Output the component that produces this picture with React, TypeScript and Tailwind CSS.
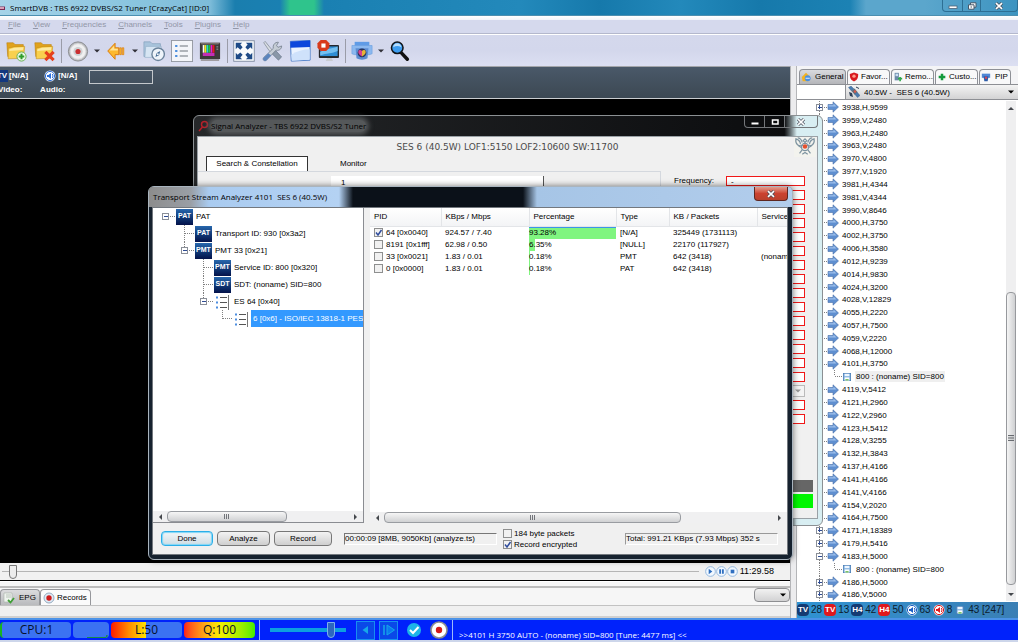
import type { ReactNode } from "react";

const channels = [
  "3938,H,9599",
  "3959,V,2480",
  "3963,H,2480",
  "3963,V,2480",
  "3970,V,4800",
  "3977,V,1920",
  "3981,H,4344",
  "3981,V,4344",
  "3990,V,8646",
  "4000,H,3750",
  "4002,H,3750",
  "4006,H,3580",
  "4012,H,9239",
  "4014,H,9830",
  "4024,H,3200",
  "4028,V,12829",
  "4055,H,2220",
  "4057,H,7500",
  "4059,V,2220",
  "4068,H,12000",
  "4101,H,3750",
  "800 : (noname) SID=800",
  "4119,V,5412",
  "4121,H,2960",
  "4122,V,2960",
  "4123,H,5412",
  "4128,V,3255",
  "4132,H,3843",
  "4137,H,4166",
  "4141,H,4166",
  "4141,V,4166",
  "4154,V,2020",
  "4164,H,7500",
  "4171,H,18389",
  "4179,H,5416",
  "4183,H,5000",
  "800 : (noname) SID=800",
  "4186,H,5000",
  "4186,V,5000",
];

const pids = [
  { pid: "64 [0x0040]", rate: "924.57 / 7.40", pct: "93.28%", bar: 100, type: "[N/A]", kb: "325449 (1731113)", service: "", checked: true },
  { pid: "8191 [0x1fff]", rate: "62.98 / 0.50", pct: "6.35%", bar: 7, type: "[NULL]", kb: "22170 (117927)", service: "", checked: false },
  { pid: "33 [0x0021]", rate: "1.83 / 0.01", pct: "0.18%", bar: 1, type: "PMT", kb: "642 (3418)", service: "(noname)", checked: false },
  { pid: "0 [0x0000]", rate: "1.83 / 0.01", pct: "0.18%", bar: 1, type: "PAT", kb: "642 (3418)", service: "", checked: false },
];

type Guide = "blank" | "line" | "tee" | "corner" | "plus" | "minus" | "minusLine" | "root";

// One cell of dotted tree lines, optionally with an expander box
function GuideCell({ kind, className }: { kind: Guide; className: string }) {
  const boxed = ["plus", "minus", "minusLine", "root"].includes(kind);
  const half = kind === "corner" || kind === "minus";
  return (
    <svg className={`h-full shrink-0 ${className}`} shapeRendering="crispEdges">
      {kind !== "blank" && kind !== "root" && (
        <line x1="50%" x2="50%" y1="0" y2={half ? "50%" : "100%"} stroke="#808080" strokeDasharray="1 1" />
      )}
      {kind !== "blank" && kind !== "line" && (
        <line x1="50%" x2="100%" y1="50%" y2="50%" stroke="#808080" strokeDasharray="1 1" />
      )}
      {boxed && (
        <svg x="50%" y="50%" overflow="visible">
          <rect x="-3" y="-3" width="6" height="6" fill="#fff" stroke="#8a8f98" />
          <path d={kind === "plus" ? "M-2 0h4M0-2v4" : "M-2 0h4"} stroke="#2f4c94" />
        </svg>
      )}
    </svg>
  );
}

function ArrowIcon() {
  return (
    <svg viewBox="0 0 12 12" className="h-3 w-3">
      <path d="M1 3.500h5V.8L11.500 6 6 11.200V8.500H1z" fill="#5f8fd0" stroke="#4a70a8" strokeWidth=".6" />
      <path d="M1.500 4.200h5V2.500L9.500 5.500h-8z" fill="#9dbfea" />
    </svg>
  );
}

function DiskIcon() {
  return (
    <svg viewBox="0 0 10 10" className="h-2 w-2 shrink-0">
      <rect x=".5" y=".5" width="9" height="9" fill="#7fb0df" stroke="#4b7fb8" />
      <rect x="2" y="1" width="6" height="3" fill="#eef6ff" />
      <rect x="2" y="5.500" width="6" height="4" fill="#fff" />
      <rect x="3" y="7.500" width="4" height="2" fill="#7cc36a" />
    </svg>
  );
}

function Caret({ className = "" }: { className?: string }) {
  return (
    <svg viewBox="0 0 6 4" className={`w-1.5 ${className}`}>
      <path d="M0 .5h6L3 3.500z" fill="currentColor" />
    </svg>
  );
}

function ToolButton({ label, children }: { label: string; children: ReactNode }) {
  return (
    <button aria-label={label} className="flex h-7 w-7 shrink-0 items-center justify-center">
      <svg viewBox="0 0 24 24" className="h-[22px] w-[22px]">
        {children}
      </svg>
    </button>
  );
}

function CaretButton({ label }: { label: string }) {
  return (
    <button aria-label={label} className="flex h-7 w-2.5 items-center justify-center text-[#303038]">
      <Caret />
    </button>
  );
}

function Divider() {
  return (
    <div className="flex h-6 w-1.5 justify-center">
      <div className="w-px bg-[#9a9ca8]" />
    </div>
  );
}

function Folder() {
  return (
    <>
      <path d="M2 3h7l2 2h9v13H3z" fill="#e0a21c" stroke="#b97f0e" strokeWidth=".6" />
      <path d="M3.500 9l6-1.500 12-.500-1.500 13-16.500.5z" fill="#f9d04e" stroke="#c08a14" strokeWidth=".6" />
      <path d="M5 10l5-1.500 10-.5-.5 3-15 1z" fill="#fdeaa0" />
    </>
  );
}

function Toolbar() {
  return (
    <div className="flex h-[31px] shrink-0 items-center bg-gradient-to-b from-[#d4d8ec] via-[#d3d7ec] to-[#dcdff2] pl-0.5">
      <ToolButton label="Open">
        <Folder />
        <circle cx="18" cy="18" r="5" fill="#e9f6e6" stroke="#5fae4c" />
        <path d="M18 15v6M15 18h6" stroke="#2f9c2a" strokeWidth="2.200" />
      </ToolButton>
      <ToolButton label="Delete">
        <Folder />
        <path d="M13.500 13l9 9M22.500 13l-9 9" stroke="#e5401d" strokeWidth="3.400" />
      </ToolButton>
      <Divider />
      <ToolButton label="Record">
        <circle cx="12" cy="12.500" r="10.500" fill="#b9bbbd" stroke="#77797c" strokeWidth=".8" />
        <circle cx="12" cy="12.500" r="8.500" fill="#f0f0f0" stroke="#d9dadc" />
        <circle cx="12" cy="12.500" r="5" fill="#cdd0d2" />
        <circle cx="12" cy="12.500" r="2.800" fill="#c92f2f" />
      </ToolButton>
      <CaretButton label="Record options" />
      <ToolButton label="Back">
        <path d="M3 12l8-8.500v5h4v7.500h-4v5z" fill="#fdb92e" stroke="#d97708" />
        <path d="M16 8.500h1.800V16H16zM18.800 8.500h1.700V16h-1.700z" fill="#fdb92e" stroke="#d97708" strokeWidth=".7" />
        <path d="M5 11.500l5-5.200v3.200h4v2z" fill="#ffe394" />
      </ToolButton>
      <CaretButton label="Back options" />
      <ToolButton label="Schedule">
        <path d="M1 2h7l2 2h9v14H1z" fill="#a9c4dc" stroke="#7f9cb8" strokeWidth=".7" />
        <path d="M3 7h17v12H2z" fill="#d6e5f3" stroke="#8fabc4" strokeWidth=".6" />
        <circle cx="16.500" cy="15.500" r="6.800" fill="#eef4fa" stroke="#6b839b" strokeWidth="1.500" />
        <path d="M18.800 12l-1.300 4.500-4 2 1.500-4.200z" fill="#3f6791" />
        <circle cx="16.200" cy="15.500" r="1" fill="#fff" />
      </ToolButton>
      <ToolButton label="Channel list">
        <rect x=".500" y=".500" width="23" height="23" fill="#f3f5f9" stroke="#9297a0" />
        <path d="M9.500 6.500h9M9.500 12h9M9.500 17.500h9" stroke="#6d747d" strokeWidth="1.200" />
        <path d="M4.500 6.500H7M4.500 12H7M4.500 17.500H7" stroke="#4c8fdf" strokeWidth="2.200" />
      </ToolButton>
      <ToolButton label="Picture">
        <path d="M1 3h22v17l-1 1H2l-1-1z" fill="#3c3a3a" />
        <path d="M1 3h22l-2 2H3z" fill="#77706c" />
        <rect x="4" y="5.500" width="13" height="12" fill="#111" />
        <path d="M4 5.500h2V14H4z" fill="#f8f8f8" />
        <path d="M6 5.500h2.200V14H6z" fill="#f1e61b" />
        <path d="M8.200 5.500h2.200V14H8.200z" fill="#20d7d7" />
        <path d="M10.400 5.500h2.200V14h-2.200z" fill="#22c832" />
        <path d="M12.600 5.500h2.200V14h-2.200z" fill="#e321d5" />
        <path d="M14.800 5.500H17V14h-2.200z" fill="#e42020" />
        <path d="M4 14h13v3.500H4z" fill="#c32fb4" />
        <path d="M19 7.500h2M19 10h2" stroke="#aaa" />
        <path d="M2 22h20" stroke="#7c746c" />
      </ToolButton>
      <Divider />
      <ToolButton label="Full screen">
        <rect x=".800" y=".800" width="22.400" height="22.400" fill="#f8fafc" stroke="#7f8ba0" />
        <path d="M3 3h7L8 5l2.500 3L8 10.500 5 8l-2 2zM21 3h-7l2 2-2.500 3 2.500 2.500L19 8l2 2zM3 21h7l-2-2 2.500-3L8 13.500 5 16l-2-2zM21 21h-7l2-2-2.500-3 2.500-2.500L19 16l2-2z" fill="#1e4a86" />
      </ToolButton>
      <ToolButton label="Settings">
        <path d="M3 3l1.500-1.500 6 7.500 4 4-2 2-4-4z" fill="#d9dde3" stroke="#7d8793" strokeWidth=".8" />
        <path d="M13 13l3-1.500 6.500 7-3.500 3.500-6.500-6.500z" fill="#8a97a8" stroke="#59687c" strokeWidth=".6" />
        <path d="M2.500 19.500L13.500 9c-1-3 1.500-7 5.500-6.500l-2 3.500 1.500 2 4-1.500c0 3.500-3 5.500-6 4.500L5.500 22.500c-2 .8-4-1-3-3z" fill="#c5ccd5" stroke="#6c7785" strokeWidth=".8" />
        <path d="M2.500 19.500l5.500-5 3 2.500-5.500 5.500c-2 .8-4-1-3-3z" fill="#5b84bd" />
      </ToolButton>
      <ToolButton label="Window">
        <path d="M1.500 1.500L23 .5v21.500L2.500 23z" fill="#eaf3ff" stroke="#4275c4" />
        <path d="M1.500 1.500L23 .5V7.500L1.500 8.500z" fill="#0c48dc" />
        <path d="M2.500 16c6-4 13-6 20-6v11.500L3 22.500z" fill="#cfe2fb" />
      </ToolButton>
      <ToolButton label="Display">
        <rect x="2" y="5.500" width="22" height="14" rx="1" fill="#26282c" />
        <path d="M3.500 7H22.500v10.500H3.500z" fill="#2f8ed4" />
        <path d="M3.500 13C10 9 17 9.500 22.500 7v5c-6 3-12 2-19 5z" fill="#74bff0" />
        <path d="M11 19.500h5l1.500 3.500h-8z" fill="#c9ccd1" />
        <path d="M4 0h6l3.500 3.500v5L10 12H4L.5 8.500v-5z" fill="#d83a1c" />
        <rect x="4.800" y="3.800" width="4.500" height="4.500" fill="#fff" />
      </ToolButton>
      <Divider />
      <ToolButton label="Capture">
        <path d="M4 2h16v5H4z" fill="#5f9be6" />
        <path d="M1 6h22v9l-3 1H4l-3-1z" fill="#8bb8ef" stroke="#6c9fe0" strokeWidth=".7" />
        <path d="M5 9h14l-1 11c-3 2-9 2-12 0z" fill="#5c8cd2" />
        <circle cx="12" cy="14" r="4.800" fill="#29365c" />
        <path d="M12 18c-3-2-4.500-3.500-4-5.500.500-2 3-2 4-.500z" fill="#d84090" />
        <path d="M12 18c3-2 4.500-3.500 4-5.500-.500-2-3-2-4-.500z" fill="#e8b338" />
      </ToolButton>
      <CaretButton label="Capture options" />
      <ToolButton label="Search">
        <path d="M13.500 14l6.500 7" stroke="#111" strokeWidth="3.800" strokeLinecap="round" />
        <circle cx="9" cy="8.500" r="6.300" fill="#3e9df0" stroke="#121417" strokeWidth="1.700" />
        <path d="M4.500 8c.5-6 8.500-6 9 0-3-2-6-2-9 0z" fill="#b9defb" />
      </ToolButton>
    </div>
  );
}

function TitleBar() {
  return (
    <div className="flex h-4 shrink-0 items-center justify-between overflow-hidden border-b border-[#4c8fb0] bg-[linear-gradient(to_right,#a5d3e8_0,#8cc6e0_120px,#7dbcd9_210px,#1a7eae_235px,#1a80b2_280px,#2fc48c_290px,#2fc48c_314px,#1a80b2_324px,#2389bb_520px,#1679ab_600px,#2389bb_680px,#1679ab_760px,#1c82b4_850px,#5ba6cc_866px,#5ba6cc_925px,#3c93c0_100%)]">
      <div className="flex items-center">
        <svg viewBox="0 0 12 12" className="mr-1 h-2.5 w-1.5">
          <path d="M0 3h10v7H0z" fill="#7a2d55" />
          <path d="M0 4h8v4H0z" fill="#d8a0b8" />
        </svg>
        <h1 className="whitespace-nowrap font-['Open_Sans',sans-serif] text-[8px] leading-4 text-black">
          SmartDVB : TBS 6922 DVBS/S2 Tuner [CrazyCat] [ID:0]
        </h1>
      </div>
      <div className="flex h-3 self-start rounded-b border border-t-0 border-[#2d6f94] text-[#d5e9f4]">
        <button aria-label="Minimize" className="flex w-5 items-center justify-center border-r border-[#2d6f94]">
          <svg viewBox="0 0 10 8" className="h-2 w-2.5">
            <rect x="1" y="4" width="8" height="2.500" fill="#fff" stroke="#4e6274" strokeWidth=".8" />
          </svg>
        </button>
        <button aria-label="Restore" className="flex w-[18px] items-center justify-center border-r border-[#2d6f94]">
          <svg viewBox="0 0 10 8" className="h-2 w-2.5">
            <path d="M3.500.8h5.500v4.400H3.500z" fill="#fff" stroke="#45586a" />
            <path d="M1.500 2.800H7v4.400H1.500z" fill="#fff" stroke="#45586a" />
            <path d="M3.500 4.500H5v1H3.500z" fill="#45586a" />
          </svg>
        </button>
        <button aria-label="Close" className="flex w-9 items-center justify-center">
          <CloseGlyph />
        </button>
      </div>
    </div>
  );
}

function CloseGlyph() {
  return (
    <svg viewBox="0 0 10 8" className="h-2 w-2.5">
      <path d="M2 1.200l6 5.600M8 1.200L2 6.800" stroke="#4b4f5a" strokeWidth="3" />
      <path d="M2 1.200l6 5.600M8 1.200L2 6.800" stroke="#fff" strokeWidth="1.600" />
    </svg>
  );
}

function MenuBar() {
  return (
    <nav className="flex h-[13px] shrink-0 items-start gap-3 bg-[#d5d9ed] pl-2 text-[8px] leading-[10px] text-[#9297a8]">
      {["File", "View", "Frequencies", "Channels", "Tools", "Plugins", "Help"].map((item) => (
        <a key={item} href="#" className="first-letter:underline">
          {item}
        </a>
      ))}
    </nav>
  );
}

function InfoPanel() {
  return (
    <div className="flex h-8 shrink-0 items-start gap-1 border-b border-[#c9cccf] bg-gradient-to-b from-[#4a5969] to-[#3c4853] pt-[3px] text-[8px] font-bold text-white">
      <div className="flex flex-col gap-0.5">
        <div className="flex h-3 items-center gap-px">
          <span className="-ml-1 flex h-3 w-3 items-center justify-center bg-[#12377f] leading-3">TV</span>
          <span>[N/A]</span>
        </div>
        <span className="-ml-0.5 leading-3">Video:</span>
      </div>
      <div className="ml-2 flex flex-col gap-0.5">
        <div className="flex h-3 items-center gap-0.5 pl-1">
          <SoundIcon color="#2e6fd8" />
          <span>[N/A]</span>
        </div>
        <span className="leading-3">Audio:</span>
      </div>
      <div className="ml-2 h-3.5 w-16 border border-[#c4c8cc]" />
    </div>
  );
}

function SoundIcon({ color }: { color: string }) {
  return (
    <svg viewBox="0 0 12 12" className="h-3 w-3 shrink-0">
      <circle cx="6" cy="6" r="5.500" fill="#fff" />
      <circle cx="6" cy="6" r="4.600" fill="none" stroke={color} strokeWidth="1" />
      <path d="M3 5h1.500L7 3v6L4.500 7H3z" fill={color} />
      <path d="M8.200 4c1 1.200 1 2.800 0 4" stroke={color} fill="none" />
    </svg>
  );
}

const panelTabs = [
  { label: "General", icon: <><path d="M1 6l5-5 5 5-2 5H2z" fill="#f3b21f" /><circle cx="8" cy="7.500" r="3.500" fill="#4a90e2" /><path d="M5.500 7.500h5" stroke="#fff" /></> },
  { label: "Favor...", icon: <><path d="M6 .5l5 2c0 5-1 7-5 9-4-2-5-4-5-9z" fill="#d8191f" /><circle cx="6" cy="5" r="2" fill="#ff9c8a" /></> },
  { label: "Remo...", icon: <><rect x="2" y="1" width="5" height="9" fill="#6b89a8" /><rect x="3" y="2" width="3" height="3" fill="#c9dff2" /><path d="M6 8h5M8.500 6v5" stroke="#2fa84a" strokeWidth="2" /></> },
  { label: "Custo...", icon: <path d="M6 2v8M2 6h8" stroke="#139a3c" strokeWidth="3" /> },
  { label: "PIP", icon: <><path d="M1 2h10v5H1z" fill="#4f87d6" /><path d="M3 5h6l-1 6H4z" fill="#2d5ca8" /><circle cx="6" cy="7" r="1.500" fill="#d0475f" /></> },
];

function ScrollArrow({ dir }: { dir: "up" | "down" | "left" | "right" }) {
  const d = { up: "M0 5h6L3 2z", down: "M0 2h6L3 5z", left: "M5 0v6L2 3z", right: "M1 0v6l3-3z" }[dir];
  return (
    <svg viewBox="0 0 6 6" className="h-1.5 w-1.5">
      <path d={d} fill="#45484d" />
    </svg>
  );
}

function ChannelPanel() {
  return (
    <aside className="flex w-[221px] shrink-0 flex-col bg-white">
      <div className="flex h-[18px] shrink-0 items-end gap-px bg-[#f4f4f6] pl-0.5">
        {panelTabs.map((tab, i) => (
          <button
            key={tab.label}
            className={`flex h-[15px] items-center whitespace-nowrap rounded-t border border-b-0 border-[#8e9096] text-[8px] ${
              i === 0 ? "w-[47px] gap-1 bg-gradient-to-b from-[#d9dade] to-[#b5b6ba]" : i === 4 ? "w-8 gap-1 bg-[#f8f8f9]" : "w-[43px] gap-0.5 bg-[#f8f8f9]"
            } pl-px`}
          >
            <svg viewBox="0 0 12 12" className="h-2.5 w-2.5 shrink-0">
              {tab.icon}
            </svg>
            {tab.label}
          </button>
        ))}
      </div>
      <div className="flex h-4 shrink-0 border-y border-[#8d8f94]">
        <input aria-label="Filter" className="w-12 min-w-0 bg-white outline-none" />
        <div className="relative flex flex-1 items-center border-l border-[#8d8f94] bg-gradient-to-b from-[#f4f4f4] to-[#d3d3d4] pl-0.5">
          <svg viewBox="0 0 12 12" className="h-3 w-3 shrink-0">
            <path d="M.5 1.500L3 0l3 3-2.500 2zM6.500 8L9 6l3 3.500-2.500 2z" fill="#4a7bb0" stroke="#33577f" strokeWidth=".4" />
            <path d="M3.500 5l3-2.500 3 3.500-3 2.500z" fill="#5c6b7c" />
            <path d="M1 6l3 1 1 4-3-1z" fill="#2b3d55" />
            <circle cx="7" cy="5.500" r="1.300" fill="#d85a4a" />
            <path d="M8 1l3 1.500" stroke="#2b3d55" />
          </svg>
          <select aria-label="Satellite" className="h-full flex-1 appearance-none bg-transparent pl-1 text-[8px] leading-[13px] outline-none">
            <option>40.5W - &nbsp;SES 6 (40.5W)</option>
          </select>
          <Caret className="pointer-events-none absolute right-1" />
        </div>
      </div>
      <div className="flex min-h-0 flex-1 py-px">
        <ul className="flex min-h-0 flex-1 flex-col pl-[15px] text-[8px]">
          {channels.map((ch, i) => {
            const child = ch.startsWith("800");
            const kind: Guide = child ? "line" : i === 35 ? "minusLine" : i === 0 || i > 32 ? "plus" : "tee";
            return (
              <li key={i} className="flex min-h-0 flex-1 items-center">
                {child && i < 30 ? <GuideCell kind="blank" className="w-[15px]" /> : <GuideCell kind={kind} className="w-[15px]" />}
                {child ? (
                  <>
                    <GuideCell kind="corner" className="mr-px w-[15px]" />
                    <DiskIcon />
                    <span className={`ml-1 px-px leading-[11px] ${i < 30 ? "bg-[#efefef]" : ""}`}>{ch}</span>
                  </>
                ) : (
                  <>
                    <ArrowIcon />
                    <span className="ml-[3px] leading-[11px]">{ch}</span>
                  </>
                )}
              </li>
            );
          })}
        </ul>
        <div className="mr-0.5 flex w-2.5 flex-col items-center bg-[#efeff0] py-1">
          <ScrollArrow dir="up" />
          <div className="h-[181px]" />
          <div className="flex w-full flex-1 items-center justify-center rounded-sm border border-[#97999d] bg-gradient-to-r from-[#f5f5f5] to-[#cfd0d2]">
            <svg viewBox="0 0 5 6" className="w-1.5">
              <path d="M0 .5h5M0 2.500h5M0 4.500h5" stroke="#55585e" strokeWidth=".8" />
            </svg>
          </div>
          <div className="h-1.5" />
          <ScrollArrow dir="down" />
        </div>
      </div>
      <div className="flex h-4 shrink-0 items-center gap-0.5 whitespace-nowrap bg-gradient-to-r from-[#2f93d2] to-[#3a7fb5] text-[10px] leading-4 text-[#0d1c2c]">
        <Badge text="TV" className="bg-[#153a72]" />28
        <Badge text="TV" className="bg-[#e0181c]" />13
        <Badge text="H4" className="bg-[#153a72]" />42
        <Badge text="H4" className="bg-[#e0181c]" />50
        <SoundIcon color="#1c5fc4" />63
        <SoundIcon color="#e0181c" />8
        <span className="px-0.5"><DiskIcon /></span>
        43 [247]
      </div>
    </aside>
  );
}

function Badge({ text, className }: { text: string; className: string }) {
  return (
    <span className={`flex h-3 w-3 shrink-0 items-center justify-center rounded-sm text-[8px] font-bold text-white ${className}`}>
      {text}
    </span>
  );
}

function BottomPanel() {
  return (
    <>
      <div className="flex h-[17px] shrink-0 items-center bg-[#f1f1f1] pl-0.5 pr-4">
        <input
          type="range"
          aria-label="Position"
          defaultValue={1}
          className="h-3.5 min-w-0 flex-1 appearance-none bg-transparent [&::-webkit-slider-runnable-track]:h-px [&::-webkit-slider-runnable-track]:bg-[#b5b5b5] [&::-webkit-slider-thumb]:-mt-1.5 [&::-webkit-slider-thumb]:h-3.5 [&::-webkit-slider-thumb]:w-2 [&::-webkit-slider-thumb]:appearance-none [&::-webkit-slider-thumb]:rounded-b [&::-webkit-slider-thumb]:border [&::-webkit-slider-thumb]:border-[#777] [&::-webkit-slider-thumb]:bg-[#ececec]"
        />
        <div className="ml-1.5 flex">
          {["M4 3l4 3-4 3z", "M3.500 3.500h2v5h-2zM6.500 3.500h2v5h-2z", "M4 4h4v4H4z"].map((d, i) => (
            <button key={d} aria-label={["Play", "Pause", "Stop"][i]} className="w-[11px]">
              <svg viewBox="0 0 12 12">
                <circle cx="6" cy="6" r="5.300" fill="#f3f9ff" stroke="#8db4dc" />
                <path d={d} fill="#2f6fc0" />
              </svg>
            </button>
          ))}
        </div>
        <span className="ml-0.5 text-[9px] leading-[17px]">11:29.58</span>
      </div>
      <div className="h-0.5 shrink-0 border-b border-white bg-black" />
      <div className="h-1.5 shrink-0 border-b-2 border-[#bcbcbc] bg-[#f6f6f6]" />
      <div className="flex h-[18px] shrink-0 items-start justify-between border-b border-[#c2c2c2] bg-[#f6f6f6]">
        <div className="flex self-end">
          <button className="flex h-4 w-10 items-center gap-1 rounded-t border border-b-0 border-[#96979b] bg-gradient-to-b from-[#dcdcde] to-[#b9babd] pl-0.5 text-[8px]">
            <svg viewBox="0 0 12 12" className="h-3 w-3">
              <path d="M1 1h8v9H1z" fill="#eef3ee" stroke="#a9b3a9" strokeWidth=".6" />
              <path d="M3 3h5M3 5h5" stroke="#98a898" strokeWidth=".6" />
              <path d="M5 8l2.500 2.500L11 6" fill="none" stroke="#3f9f36" strokeWidth="1.800" />
            </svg>
            EPG
          </button>
          <button className="flex h-4 w-[51px] items-center gap-0.5 rounded-t border border-b-0 border-[#96979b] bg-[#fbfbfb] pl-0.5 text-[8px]">
            <svg viewBox="0 0 12 12" className="h-3 w-3">
              <circle cx="6" cy="6" r="5" fill="#dfe9f3" stroke="#93aac0" />
              <circle cx="6" cy="6" r="2.700" fill="#cf1a1a" />
            </svg>
            Records
          </button>
        </div>
        <div className="relative flex h-3.5 w-9 items-center">
          <select aria-label="View" className="h-full w-full appearance-none rounded-sm border border-[#8e8f92] bg-gradient-to-b from-[#f2f2f2] to-[#d2d2d3]" />
          <Caret className="pointer-events-none absolute right-1" />
        </div>
      </div>
      <div className="h-3 shrink-0 border-b-2 border-[#d0d0d0] bg-[#f0f0f0]" />
    </>
  );
}

function StatusBar() {
  return (
    <footer className="flex h-6 shrink-0 items-center gap-1 border-y-2 border-b-[#cdd6ea] border-t-[#4c93e8] bg-[#0022fb] font-['Open_Sans',sans-serif]">
      <div className="flex gap-0.5 text-xs leading-4 text-[#06102c]">
        <div className="h-4 w-[71px] rounded border-l-2 border-[#19b51c] bg-[#3b72f2] text-center">CPU:1</div>
        <div className="flex h-4 w-9 items-end justify-end rounded bg-[#3b72f2]">
          <svg viewBox="0 0 22 4" className="w-[22px]">
            <path d="M0 3.500h19l1-2.500v2.500" stroke="#188c4a" fill="none" />
          </svg>
        </div>
        <div className="h-4 w-[71px] rounded bg-[linear-gradient(to_right,#ff1a00,#ff8c00_25%,#ffe600_50%,#3b72f2_50%)] text-center">L:50</div>
        <div className="h-4 w-[71px] rounded bg-gradient-to-r from-[#ff1a1a] via-[#f7ee00] to-[#3dee00] text-center">Q:100</div>
      </div>
      <div className="h-full w-px bg-[#9db9fa]" />
      <input
        type="range"
        aria-label="Volume"
        defaultValue={84}
        className="mx-1.5 h-4 w-[76px] appearance-none bg-transparent [&::-webkit-slider-runnable-track]:h-1 [&::-webkit-slider-runnable-track]:bg-[#0c9fe0] [&::-webkit-slider-thumb]:-mt-1.5 [&::-webkit-slider-thumb]:h-4 [&::-webkit-slider-thumb]:w-2 [&::-webkit-slider-thumb]:appearance-none [&::-webkit-slider-thumb]:rounded-b-full [&::-webkit-slider-thumb]:border [&::-webkit-slider-thumb]:border-[#7fb0ea] [&::-webkit-slider-thumb]:bg-[#2d66c0]"
      />
      <button aria-label="Previous" className="flex h-[19px] w-[19px] items-center justify-center border border-[#178ff0] bg-[#0a49e8]">
        <svg viewBox="0 0 16 16" className="h-4 w-4">
          <path d="M10 4v8L4.500 8z" fill="#16a8e8" />
        </svg>
      </button>
      <button aria-label="Next" className="flex h-[19px] w-[19px] items-center justify-center border border-[#178ff0] bg-[#0a49e8]">
        <svg viewBox="0 0 16 16" className="h-4 w-4">
          <path d="M3 3v10" stroke="#16a8e8" strokeWidth="1.500" />
          <path d="M6 3v10l7.500-5z" fill="#0a7af0" stroke="#16a8e8" />
        </svg>
      </button>
      <button aria-label="Confirm" className="ml-1 w-4">
        <svg viewBox="0 0 16 16">
          <circle cx="8" cy="8" r="7" fill="#1cb4e8" />
          <path d="M4 8l3 3 5.500-6" fill="none" stroke="#fff" strokeWidth="2" />
        </svg>
      </button>
      <button aria-label="Record" className="ml-1 w-[18px]">
        <svg viewBox="0 0 18 18">
          <circle cx="9" cy="9" r="8" fill="#fff" stroke="#8d8d90" strokeWidth="1.600" />
          <circle cx="9" cy="9" r="3.200" fill="#d31a1a" />
        </svg>
      </button>
      <div className="h-full w-px bg-[#9db9fa]" />
      <span className="ml-0.5 self-end whitespace-nowrap font-['Open_Sans',sans-serif] text-[8px] leading-[11px] text-white">
        &gt;&gt;4101 H 3750 AUTO - (noname) SID=800 [Tune: 4477 ms] &lt;&lt;
      </span>
    </footer>
  );
}

function SignalWindow() {
  const fields = Array.from({ length: 18 }, (_, i) => i);
  return (
    <section className="absolute left-[193px] top-[115px] flex h-[411px] w-[630px] flex-col rounded-md border border-[#8b9093] bg-gradient-to-r from-[#26282a] via-[#0c0d0f] via-94% to-[#d8eef2] to-96% pb-1.5 pl-[3px] pr-1">
      <div className="flex h-5 shrink-0 items-center justify-between">
        <div className="flex items-center gap-0.5">
          <svg viewBox="0 0 12 12" className="h-3 w-3">
            <circle cx="7.500" cy="4.500" r="3" fill="none" stroke="#b8202a" strokeWidth="1.500" />
            <path d="M5.500 7L2 11" stroke="#b8202a" strokeWidth="1.500" />
          </svg>
          <h2 className="rounded-full bg-[#55585a] font-['Open_Sans',sans-serif] text-[8px] leading-3 text-black shadow-[0_0_5px_3px_#55585a]">
            Signal Analyzer - TBS 6922 DVBS/S2 Tuner
          </h2>
        </div>
        <div className="flex h-3 self-start rounded-b border border-t-0 border-[#74777a]">
          <button aria-label="Minimize" className="flex w-5 items-center justify-center border-r border-[#74777a]">
            <svg viewBox="0 0 10 8" className="h-2 w-2.5"><path d="M1.500 4.500h7v2h-7z" fill="#fff" /></svg>
          </button>
          <button aria-label="Maximize" className="flex w-5 items-center justify-center border-r border-[#74777a]">
            <svg viewBox="0 0 10 8" className="h-2 w-2.5"><path d="M2.500 2h5.500v4H2.500z" fill="none" stroke="#fff" strokeWidth="1.500" /></svg>
          </button>
          <button aria-label="Close" className="flex w-8 items-center justify-center">
            <CloseGlyph />
          </button>
        </div>
      </div>
      <div className="flex min-h-0 flex-1 flex-col border border-[#9aa1a6] bg-[#f0f0f0]">
        <div className="flex h-[19px] shrink-0 items-start justify-between">
          <span className="w-6" />
          <span className="self-center font-['DejaVu_Sans',sans-serif] text-[9px] leading-3 text-[#4a4a4a]">
            SES 6 (40.5W) LOF1:5150 LOF2:10600 SW:11700
          </span>
          <svg viewBox="0 0 24 22" className="h-5 w-6 shrink-0">
            <rect width="24" height="22" fill="#f3f3ee" />
            <g fill="none" stroke="#7d93a0" strokeWidth="1.300">
              <path d="M10 9C5 11 1 8 2 2c3 1 5 3 5 6M14 9c5 2 9-1 8-7-3 1-5 3-5 6" />
              <path d="M4 1c2 0 4 2 5 5M20 1c-2 0-4 2-5 5M5 10l4 2M19 10l-4 2M9 14l-3 4M15 14l3 4M9 19l3-2 3 2M10 4l2-2 2 2-2 2z" />
              <circle cx="12" cy="11" r="4" />
            </g>
            <circle cx="12" cy="10.500" r="2.500" fill="#e4512e" />
          </svg>
        </div>
        <div className="flex pl-2 text-[8px] leading-3">
          <button className="h-[15px] w-[102px] border border-b-0 border-[#333] bg-white">Search &amp; Constellation</button>
          <button className="ml-6 px-2">Monitor</button>
        </div>
        <div className="flex min-h-0 flex-1 justify-between">
          <div className="flex w-[463px] border-r border-t border-[#d4d8de] pl-[133px]">
            <div className="mt-1 h-40 w-[213px] border-r border-[#555] bg-white pl-2.5 pt-0.5 text-[8px] leading-[9px]">
              1
              <div className="ml-1 h-px bg-[#555]" />
            </div>
          </div>
          <div className="mr-1 flex flex-col pt-[5px] text-[8px]">
            {fields.map((i) => (
              <label key={i} className="mb-1 mr-2 flex h-2.5 items-center gap-3">
                <span className="w-10 leading-[10px]">{i === 0 ? "Frequency:" : ""}</span>
                {i === 15 ? (
                  <span className="relative flex items-center">
                    <select aria-label="Mode" className="h-3 w-[79px] appearance-none border border-[#bbb] bg-[#f4f4f4]" />
                    <Caret className="pointer-events-none absolute right-1 text-[#999]" />
                  </span>
                ) : (
                  <input aria-label={`Field ${i + 1}`} defaultValue={i === 0 ? "-" : ""} className="h-2.5 w-[79px] border border-[#f01818] bg-white pl-1 leading-none outline-none" />
                )}
              </label>
            ))}
            <div className="mt-auto h-3 bg-[#666]" />
            <div className="mb-2.5 mt-0.5 h-3.5 bg-[#00f600]" />
          </div>
        </div>
      </div>
    </section>
  );
}

function Tag({ text }: { text: string }) {
  return (
    <span className="mx-px flex h-4 w-[17px] shrink-0 items-center justify-center bg-gradient-to-b from-[#2767ad] to-[#05124a] text-[7px] font-bold text-white">
      {text}
    </span>
  );
}

function ListIcon() {
  return (
    <svg viewBox="0 0 19 16" className="h-4 w-[19px] shrink-0">
      <path d="M3 3.500h2M3 8.500h2M3 13.500h2" stroke="#4d8ee0" strokeWidth="2" />
      <path d="M7 3.500h7M7 8.500h7M7 13.500h7" stroke="#555" strokeWidth="1.200" />
      <path d="M15.500 1v15" stroke="#777" />
    </svg>
  );
}

const streamTree: { guides: Guide[]; icon: string; text: string }[] = [
  { guides: ["root"], icon: "PAT", text: "PAT" },
  { guides: ["blank", "tee"], icon: "PAT", text: "Transport ID: 930 [0x3a2]" },
  { guides: ["blank", "minus"], icon: "PMT", text: "PMT 33 [0x21]" },
  { guides: ["blank", "blank", "tee"], icon: "PMT", text: "Service ID: 800 [0x320]" },
  { guides: ["blank", "blank", "tee"], icon: "SDT", text: "SDT: (noname) SID=800" },
  { guides: ["blank", "blank", "minus"], icon: "", text: "ES 64 [0x40]" },
  { guides: ["blank", "blank", "blank", "corner"], icon: "", text: "6 [0x6] - ISO/IEC 13818-1 PES packets" },
];

function HScroll({ className }: { className: string }) {
  return (
    <div className="flex h-[11px] shrink-0 items-center justify-between bg-[#f0f0f1] px-1">
      <ScrollArrow dir="left" />
      <div className={`ml-1 mr-auto flex h-full items-center justify-center rounded-sm border border-[#999ca1] bg-gradient-to-b from-[#f6f6f6] to-[#d0d1d3] ${className}`}>
        <svg viewBox="0 0 6 5" className="w-1.5">
          <path d="M.5 0v5M2.500 0v5M4.500 0v5" stroke="#55585e" strokeWidth=".8" />
        </svg>
      </div>
      <ScrollArrow dir="right" />
    </div>
  );
}

function CheckBox({ label, checked = false, hideLabel = false }: { label: string; checked?: boolean; hideLabel?: boolean }) {
  return (
    <label className="relative flex items-center gap-0.5 whitespace-nowrap">
      <input
        type="checkbox"
        defaultChecked={checked}
        aria-label={hideLabel ? label : undefined}
        className="peer h-[9px] w-[9px] shrink-0 appearance-none border border-[#8e8f8f] bg-[#f1f1f1]"
      />
      <svg viewBox="0 0 9 9" className="pointer-events-none absolute left-0 hidden h-[9px] w-[9px] peer-checked:block">
        <path d="M2 4.500L4 7l3.500-5" fill="none" stroke="#2f4c9c" strokeWidth="1.500" />
      </svg>
      {!hideLabel && label}
    </label>
  );
}

function StreamWindow() {
  return (
    <section className="absolute left-[148px] top-[186px] flex h-[374px] w-[645px] flex-col rounded-md border border-[#a9b4be] bg-[#16222f] pb-1 pl-[3px] pr-1 shadow-[0_0_6px_#0008]">
      <div className="-ml-[3px] -mr-1 flex h-[20px] shrink-0 items-center justify-between rounded-t bg-[linear-gradient(to_right,#8c8c8c_0,#9a9fa6_42px,#a9cbf0_60px,#b4d2f3_190px,#0b1119_204px,#0b1119_374px,#a6c5e6_388px,#b2cdec)] pl-1">
        <h2 className="whitespace-pre font-['Open_Sans',sans-serif] text-[8px] leading-4 text-black">
          Transport Stream Analyzer 4101  SES 6 (40.5W)
        </h2>
        <button aria-label="Close" className="mr-1 flex h-3.5 w-[34px] items-center justify-center self-start rounded-b border border-t-0 border-[#5e2620] bg-gradient-to-b from-[#e39a8c] via-[#cb4230] to-[#b9402c]">
          <CloseGlyph />
        </button>
      </div>
      <div className="flex min-h-0 flex-1 flex-col border border-[#73787e] bg-[#f0f0f0] text-[8px]">
        <div className="flex min-h-0 flex-1 gap-1.5">
          <div className="flex w-[211px] shrink-0 flex-col overflow-hidden border-b border-r border-[#8a8c91] bg-white">
            <ul className="flex-1 pl-[3px]">
              {streamTree.map((row, i) => (
                <li key={i} className="flex h-[17px] items-center whitespace-nowrap">
                  {row.guides.map((g, j) => (
                    <GuideCell key={j} kind={g} className="w-[19px]" />
                  ))}
                  {row.icon ? <Tag text={row.icon} /> : <ListIcon />}
                  <span className={`leading-[17px] ${i === 6 ? "flex-1 bg-[#3399ff] px-0.5 text-white" : "px-0.5"}`}>{row.text}</span>
                </li>
              ))}
            </ul>
            <HScroll className="w-[120px]" />
          </div>
          <div className="flex min-w-0 flex-1 flex-col overflow-hidden bg-white">
            <div className="min-h-0 flex-1 overflow-hidden">
              <table className="w-[430px] table-fixed border-collapse text-left">
                <thead>
                  <tr className="h-[18px] bg-gradient-to-b from-white to-[#f3f4f6]">
                    {[
                      ["PID", "w-[71px]"],
                      ["KBps / Mbps", "w-[88px]"],
                      ["Percentage", "w-[87px]"],
                      ["Type", "w-[53px]"],
                      ["KB / Packets", "w-[88px]"],
                      ["Service", "w-[43px]"],
                    ].map(([name, width]) => (
                      <th key={name} className={`border-b border-r border-[#e3e5e8] px-1 font-normal leading-3 ${width}`}>
                        {name}
                      </th>
                    ))}
                  </tr>
                </thead>
                <tbody>
                  {pids.map((row, i) => (
                    <tr key={row.pid} className="h-3 whitespace-nowrap leading-3">
                      <td className="py-0 pl-1">
                        <div className="flex items-center gap-[3px]">
                          <CheckBox label={row.pid} checked={row.checked} hideLabel />
                          {row.pid}
                        </div>
                      </td>
                      <td className="px-1 py-0">{row.rate}</td>
                      <td className="p-0">
                        <div className="relative">
                          <div
                            className={`absolute inset-y-0 left-0 bg-[#80f580] ${i === 0 ? "border-t border-[#3c94e8]" : ""}`}
                            style={{ width: `${row.bar}%` }}
                          />
                          <span className="relative">{row.pct}</span>
                        </div>
                      </td>
                      <td className="px-1 py-0">{row.type}</td>
                      <td className="px-1 py-0">{row.kb}</td>
                      <td className="px-1 py-0">{row.service}</td>
                    </tr>
                  ))}
                </tbody>
              </table>
            </div>
            <HScroll className="w-[297px]" />
          </div>
        </div>
        <div className="flex h-[31px] shrink-0 items-center pl-2">
          <button className="h-[15px] w-[52px] rounded-sm border border-[#2aaee8] bg-gradient-to-b from-[#f3f6f8] to-[#cfdde4] shadow-[inset_0_0_1px_1px_#7fd6f7]">Done</button>
          <button className="ml-1 h-[15px] w-[53px] rounded-sm border border-[#777] bg-gradient-to-b from-[#f3f3f3] to-[#cfcfcf]">Analyze</button>
          <button className="ml-1 h-[15px] w-[58px] rounded-sm border border-[#777] bg-gradient-to-b from-[#f3f3f3] to-[#cfcfcf]">Record</button>
          <output className="ml-3 h-3 w-[153px] whitespace-nowrap border border-b-white border-l-[#777] border-r-white border-t-[#777] leading-[10px]">
            00:00:09 [8MB, 9050Kb] (analyze.ts)
          </output>
          <div className="ml-1.5 flex w-[122px] flex-col leading-[11px]">
            <CheckBox label="184 byte packets" />
            <CheckBox label="Record encrypted" checked />
          </div>
          <output className="h-3 w-[153px] whitespace-nowrap border border-b-white border-l-[#999] border-r-white border-t-[#999] leading-[10px]">
            Total: 991.21 KBps (7.93 Mbps) 352 s
          </output>
        </div>
      </div>
    </section>
  );
}

export default function App() {
  return (
    <div className="relative flex h-screen w-full flex-col overflow-hidden bg-[#f0f0f0] font-['Liberation_Sans',Arial,sans-serif] text-black">
      <TitleBar />
      <div className="h-1 shrink-0 bg-gradient-to-b from-white to-[#f2f4fa]" />
      <MenuBar />
      <div className="h-0.5 shrink-0 border-b border-white bg-[#b4b8cc]" />
      <Toolbar />
      <div className="flex min-h-0 flex-1">
        <main className="flex min-w-0 flex-1 flex-col border-t border-[#a4a6aa]">
          <InfoPanel />
          <div className="min-h-0 flex-1 bg-black" />
          <BottomPanel />
        </main>
        <div className="w-[7px] shrink-0 border-x border-[#b4b5b8] bg-[#ececee]" />
        <ChannelPanel />
      </div>
      <StatusBar />
      <SignalWindow />
      <StreamWindow />
    </div>
  );
}
